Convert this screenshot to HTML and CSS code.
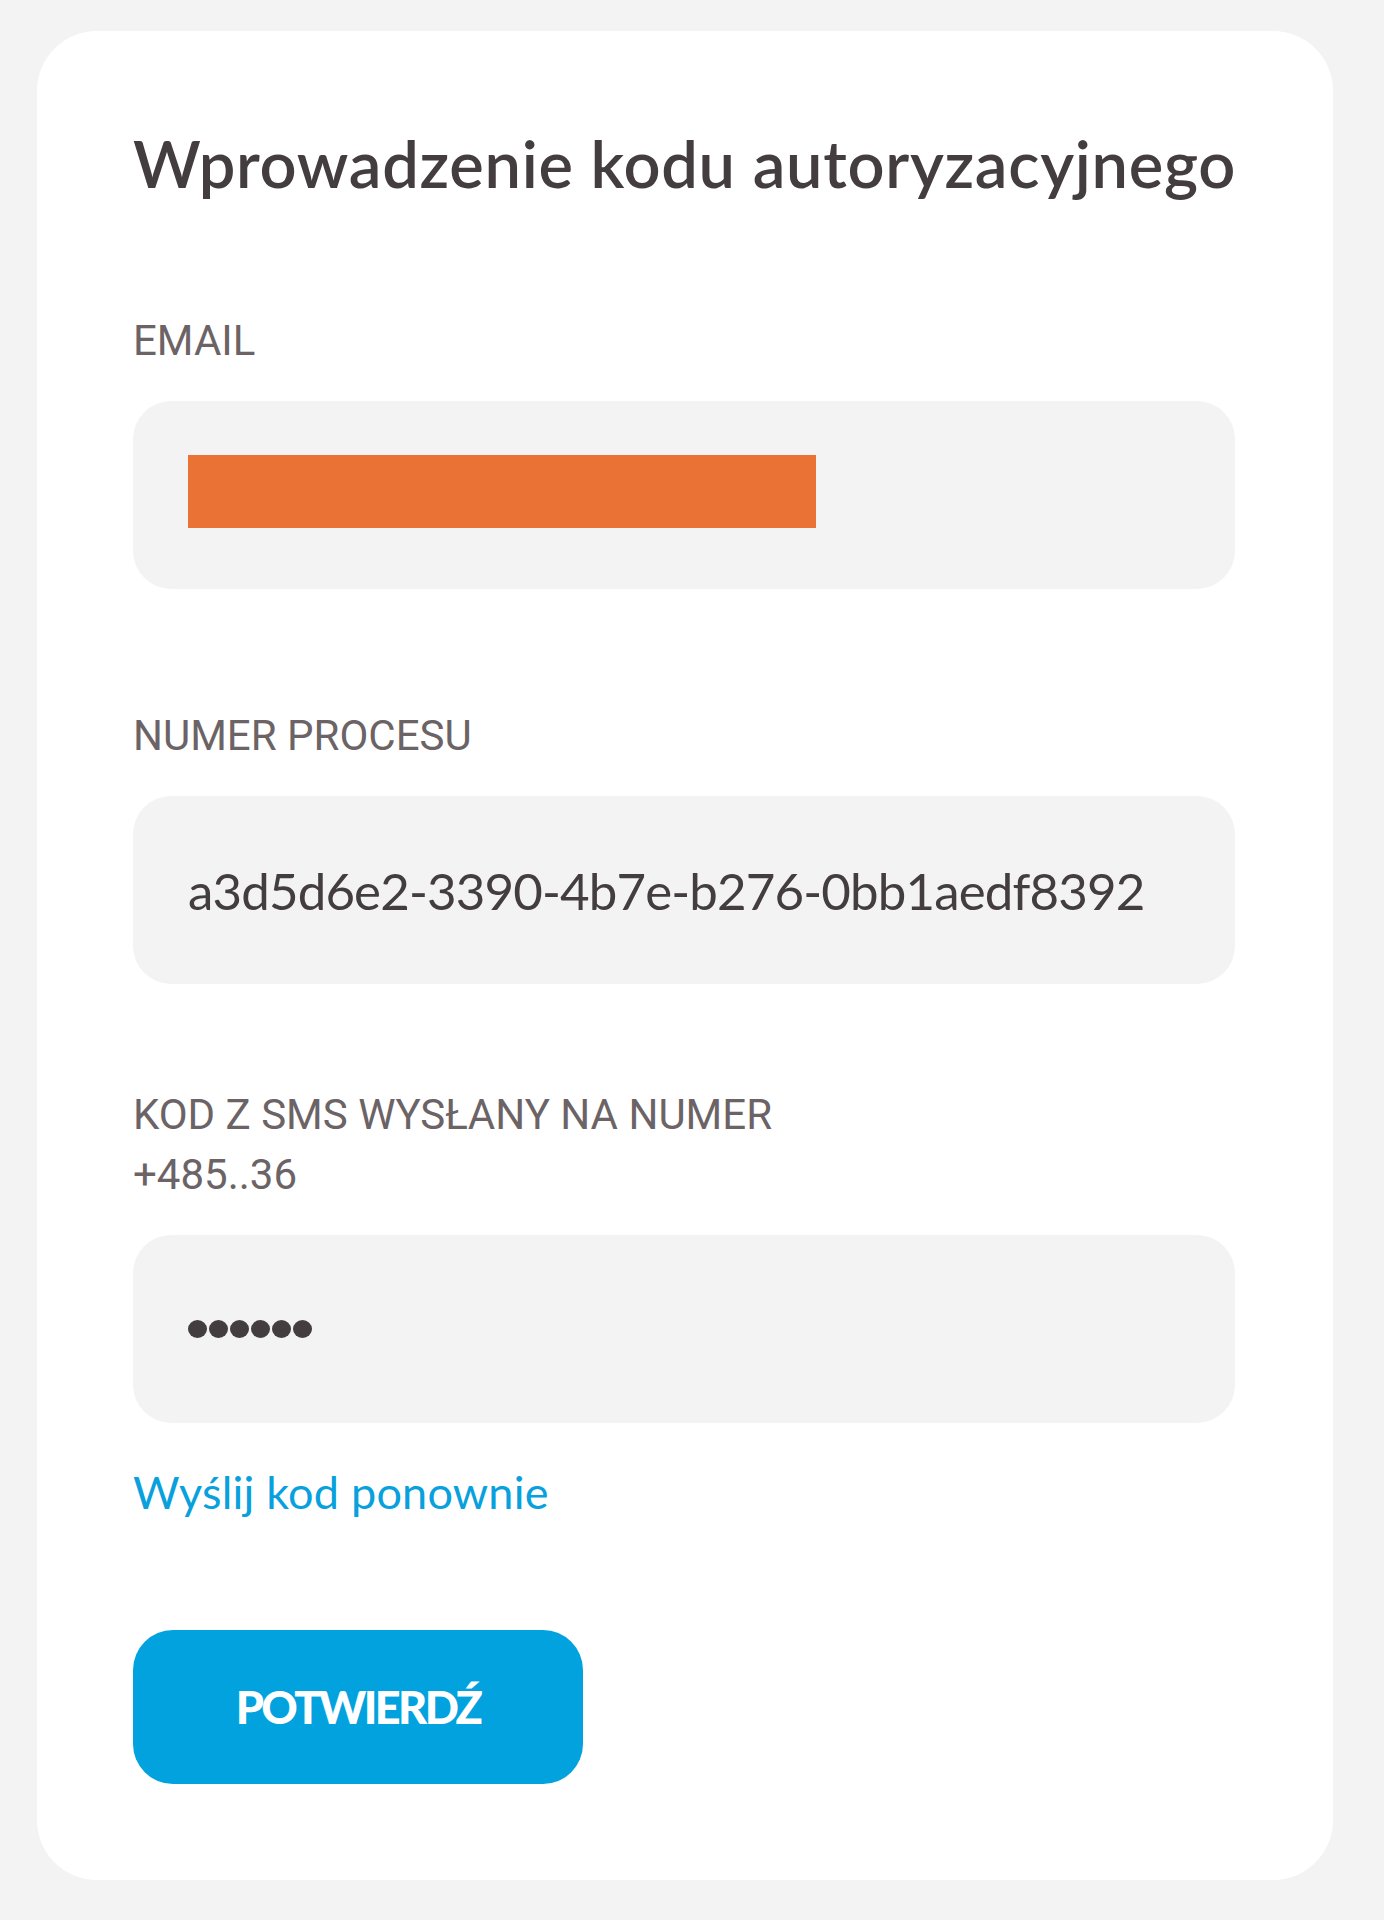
FILE: index.html
```html
<!DOCTYPE html>
<html lang="pl">
<head>
<meta charset="utf-8">
<title>Wprowadzenie kodu autoryzacyjnego</title>
<link rel="stylesheet" href="styles.css">
</head>
<body>
<main class="card">
  <h1 class="title">Wprowadzenie kodu autoryzacyjnego</h1>

  <div class="field field--email">
    <label class="field-label">EMAIL</label>
    <div class="field-box"><span class="redacted"></span></div>
  </div>

  <div class="field field--process">
    <label class="field-label">NUMER PROCESU</label>
    <div class="field-box"><span class="field-value">a3d5d6e2-3390-4b7e-b276-0bb1aedf8392</span></div>
  </div>

  <div class="field field--sms">
    <label class="field-label">KOD Z SMS WYSŁANY NA NUMER<br>+485..36</label>
    <div class="field-box">
      <span class="dots"><i class="dot"></i><i class="dot"></i><i class="dot"></i><i class="dot"></i><i class="dot"></i><i class="dot"></i></span>
    </div>
  </div>

  <a class="resend" href="#">Wyślij kod ponownie</a>

  <button class="confirm" type="button">POTWIERDŹ</button>
</main>
</body>
</html>
```
FILE: styles.css
```css
html, body {
  margin: 0;
  background: #f3f3f3;
}

body {
  padding: 31px 51px 40px 37px;
  font-family: "Lato", "Open Sans", sans-serif;
}

.card {
  background: #ffffff;
  border-radius: 60px;
  padding: 96px 98px 96px 96px;
  display: flex;
  flex-direction: column;
  align-items: flex-start;
}

.title {
  margin: 0 0 112px 0;
  font-family: "Lato", sans-serif;
  font-weight: 600;
  font-size: 65px;
  line-height: 72px;
  color: #433d3f;
  letter-spacing: 0.7px;
  white-space: nowrap;
}

.field {
  align-self: stretch;
  display: flex;
  flex-direction: column;
}

.field--email { margin-bottom: 117px; }
.field--process { margin-bottom: 101px; }
.field--sms { margin-bottom: 42px; }

.field-label {
  font-family: "Roboto", "Liberation Sans", sans-serif;
  font-weight: 400;
  font-size: 42px;
  line-height: 60px;
  color: #6b6365;
  margin-bottom: 30px;
}

.field-box {
  height: 188px;
  background: #f3f3f3;
  border-radius: 38px;
  padding-left: 55px;
  display: flex;
  align-items: center;
}

.redacted {
  display: block;
  width: 628px;
  height: 73px;
  background: #e97234;
  margin-top: -8px;
}

.field-value {
  font-family: "Lato", sans-serif;
  font-size: 51px;
  letter-spacing: -0.85px;
  color: #433d3f;
  line-height: 1;
}

.dots {
  display: flex;
  gap: 2px;
}

.dot {
  display: block;
  width: 19px;
  height: 18px;
  border-radius: 50%;
  background: #433d3f;
}

.resend {
  font-family: "Lato", sans-serif;
  font-size: 45px;
  line-height: 54px;
  letter-spacing: 0.2px;
  color: #08a0dd;
  text-decoration: none;
  margin-bottom: 111px;
}

.confirm {
  width: 450px;
  height: 154px;
  border: none;
  border-radius: 40px;
  background: #02a2df;
  color: #ffffff;
  font-family: "Lato", sans-serif;
  font-weight: 900;
  font-size: 45px;
  letter-spacing: -2.6px;
  padding: 0;
  cursor: pointer;
}
```
